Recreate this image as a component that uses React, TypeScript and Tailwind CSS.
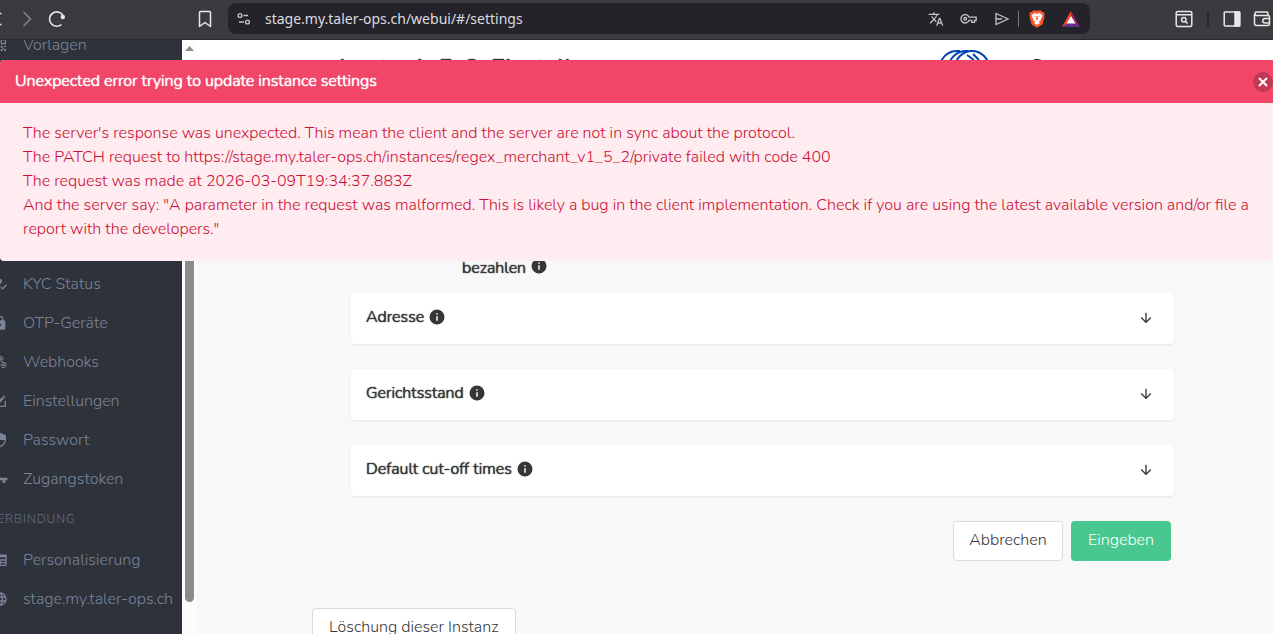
import React from 'react';

const Icon: React.FC<{ d: string; className?: string }> = ({ d, className = 'size-4' }) => (
  <svg viewBox="0 0 24 24" fill="currentColor" aria-hidden="true" className={`shrink-0 ${className}`}>
    <path d={d} />
  </svg>
);

const ICONS = {
  qrcode: 'M3 3h8v8H3zM5 5v4h4V5zM13 3h8v8h-8zM15 5v4h4V5zM3 13h8v8H3zM5 15v4h4v-4zM13 13h3v3h-3zM18 13h3v2h-3zM16 16h2v2h-2zM13 18h3v3h-3zM18 18h3v3h-3z',
  accountCheck: 'M21.1,12.5L22.5,13.91L15.97,20.5L12.5,17L13.9,15.59L15.97,17.67L21.1,12.5M10,17L13,20H3V18C3,15.79 6.58,14 11,14L12.89,14.11L10,17M11,4A4,4 0 0,1 15,8A4,4 0 0,1 11,12A4,4 0 0,1 7,8A4,4 0 0,1 11,4Z',
  lock: 'M12,17A2,2 0 0,0 14,15C14,13.89 13.1,13 12,13A2,2 0 0,0 10,15A2,2 0 0,0 12,17M18,8A2,2 0 0,1 20,10V20A2,2 0 0,1 18,22H6A2,2 0 0,1 4,20V10C4,8.89 4.9,8 6,8H7V6A5,5 0 0,1 12,1A5,5 0 0,1 17,6V8H18M12,3A3,3 0 0,0 9,6V8H15V6A3,3 0 0,0 12,3Z',
  webhook: 'M10.46,19C9,21.07 6.15,21.59 4.09,20.15C2.04,18.71 1.56,15.84 3,13.75C3.87,12.5 5.21,11.83 6.58,11.77L6.63,13.2C5.72,13.27 4.84,13.74 4.27,14.56C3.27,16 3.58,17.94 4.95,18.91C6.33,19.87 8.26,19.5 9.26,18.07C9.57,17.62 9.75,17.13 9.82,16.63V15.62L15.4,15.58L15.47,15.47C16,14.55 17.15,14.23 18.05,14.75C18.95,15.27 19.26,16.43 18.73,17.35C18.2,18.26 17.04,18.58 16.14,18.06C15.73,17.83 15.44,17.46 15.31,17.04L11.24,17.06C11.13,17.73 10.87,18.38 10.46,19M17.74,11.86C20.27,12.17 22.07,14.44 21.76,16.93C21.45,19.43 19.15,21.2 16.62,20.89C15.13,20.71 13.9,19.86 13.19,18.68L14.43,17.96C14.92,18.73 15.75,19.28 16.75,19.41C18.5,19.62 20.05,18.43 20.26,16.76C20.47,15.09 19.23,13.56 17.5,13.35C16.96,13.29 16.44,13.36 15.97,13.53L15.12,13.97L12.54,9.2H12.32C11.26,9.16 10.41,8.29 10.44,7.25C10.47,6.21 11.4,5.4 12.45,5.44C13.5,5.5 14.33,6.35 14.3,7.39C14.28,7.83 14.11,8.23 13.84,8.54L15.74,12.05C16.36,11.85 17.04,11.78 17.74,11.86M8.25,9.14C7.25,6.79 8.31,4.1 10.62,3.12C12.94,2.14 15.62,3.25 16.62,5.6C17.21,6.97 17.09,8.47 16.42,9.67L15.18,8.95C15.6,8.14 15.67,7.15 15.27,6.22C14.59,4.62 12.78,3.85 11.23,4.5C9.67,5.16 8.97,7 9.65,8.6C9.93,9.26 10.4,9.77 10.97,10.11L11.36,10.32L8.29,15.31C8.32,15.36 8.36,15.42 8.39,15.5C8.88,16.41 8.54,17.56 7.62,18.05C6.71,18.54 5.56,18.18 5.06,17.24C4.57,16.31 4.91,15.16 5.83,14.67C6.22,14.46 6.65,14.41 7.06,14.5L9.37,10.73C8.9,10.3 8.5,9.76 8.25,9.14Z',
  edit: 'M5,3C3.89,3 3,3.89 3,5V19A2,2 0 0,0 5,21H19A2,2 0 0,0 21,19V12H19V19H5V5H12V3H5M17.78,4C17.61,4 17.43,4.07 17.3,4.2L16.08,5.41L18.58,7.91L19.8,6.7C20.06,6.44 20.06,6 19.8,5.75L18.25,4.2C18.12,4.07 17.95,4 17.78,4M15.37,6.12L8,13.5V16H10.5L17.87,8.62L15.37,6.12Z',
  security: 'M12,12H19C18.47,16.11 15.72,19.78 12,20.92V12H5V6.3L12,3.19M12,1L3,5V11C3,16.55 6.84,21.73 12,23C17.16,21.73 21,16.55 21,11V5L12,1Z',
  key: 'M7 14C5.9 14 5 13.1 5 12S5.9 10 7 10 9 10.9 9 12 8.1 14 7 14M12.6 10C11.8 7.7 9.6 6 7 6C3.7 6 1 8.7 1 12S3.7 18 7 18C9.6 18 11.8 16.3 12.6 14H16V18H20V14H23V10H12.6Z',
  newspaper: 'M20,11H4V8H20M20,15H13V13H20M20,19H13V17H20M11,19H4V13H11M20.33,4.67L18.67,3L17,4.67L15.33,3L13.67,4.67L12,3L10.33,4.67L8.67,3L7,4.67L5.33,3L3.67,4.67L2,3V19A2,2 0 0,0 4,21H20A2,2 0 0,0 22,19V3L20.33,4.67Z',
  web: 'M16.36,14C16.44,13.34 16.5,12.68 16.5,12C16.5,11.32 16.44,10.66 16.36,10H19.74C19.9,10.64 20,11.31 20,12C20,12.69 19.9,13.36 19.74,14M14.59,19.56C15.19,18.45 15.65,17.25 15.97,16H18.92C17.96,17.65 16.43,18.93 14.59,19.56M14.34,14H9.66C9.56,13.34 9.5,12.68 9.5,12C9.5,11.32 9.56,10.65 9.66,10H14.34C14.43,10.65 14.5,11.32 14.5,12C14.5,12.68 14.43,13.34 14.34,14M12,19.96C11.17,18.76 10.5,17.43 10.09,16H13.91C13.5,17.43 12.83,18.76 12,19.96M8,8H5.08C6.03,6.34 7.57,5.06 9.4,4.44C8.8,5.55 8.35,6.75 8,8M5.08,16H8C8.35,17.25 8.8,18.45 9.4,19.56C7.57,18.93 6.03,17.65 5.08,16M4.26,14C4.1,13.36 4,12.69 4,12C4,11.31 4.1,10.64 4.26,10H7.64C7.56,10.66 7.5,11.32 7.5,12C7.5,12.68 7.56,13.34 7.64,14M12,4.03C12.83,5.23 13.5,6.57 13.91,8H10.09C10.5,6.57 11.17,5.23 12,4.03M18.92,8H15.97C15.65,6.75 15.19,5.55 14.59,4.44C16.43,5.07 17.96,6.34 18.92,8M12,2C6.47,2 2,6.5 2,12A10,10 0 0,0 12,22A10,10 0 0,0 22,12A10,10 0 0,0 12,2Z',
  information: 'M13,9H11V7H13M13,17H11V11H13M12,2A10,10 0 0,0 2,12A10,10 0 0,0 12,22A10,10 0 0,0 22,12A10,10 0 0,0 12,2Z',
  arrowDown: 'M11,4H13V16L18.5,10.5L19.92,11.92L12,19.84L4.08,11.92L5.5,10.5L11,16V4Z',
};

const instanceItems = [
  { label: 'KYC Status', icon: ICONS.accountCheck },
  { label: 'OTP-Geräte', icon: ICONS.lock },
  { label: 'Webhooks', icon: ICONS.webhook },
  { label: 'Einstellungen', icon: ICONS.edit },
  { label: 'Passwort', icon: ICONS.security },
  { label: 'Zugangstoken', icon: ICONS.key },
];

const connectionItems = [
  { label: 'Personalisierung', icon: ICONS.newspaper },
  { label: 'stage.my.taler-ops.ch', icon: ICONS.web },
];

const sections = ['Adresse', 'Gerichtsstand', 'Default cut-off times'];

const HeavyText: React.FC<{ children: React.ReactNode }> = ({ children }) => (
  <span className="[text-shadow:0_0_1px_currentColor,0_0_1px_currentColor]">{children}</span>
);

const MenuItem: React.FC<{ label: string; icon: string }> = ({ label, icon }) => (
  <li>
    <a href="#/settings" className="flex h-[39px] items-center gap-[15px] whitespace-nowrap">
      <Icon d={icon} />
      {label}
    </a>
  </li>
);

const BrowserBar = () => (
  <header className="flex h-10 shrink-0 items-center border-b border-[#2a292e] bg-[#3b3a3f] pb-0.5 text-[#e8e8ea]">
    <button aria-label="Back" className="w-4 shrink-0">
      <svg viewBox="0 0 16 18" className="h-[18px] w-4" fill="none" stroke="currentColor" strokeWidth="1.5">
        <path d="M1.500 3.500H-2v11h3.500" />
      </svg>
    </button>
    <button aria-label="Forward" className="ml-1 text-[#87868b]">
      <svg viewBox="0 0 16 18" className="h-[18px] w-4" fill="none" stroke="currentColor" strokeWidth="1.5">
        <path d="M3.500 2l7 7-7 7" />
      </svg>
    </button>
    <button aria-label="Reload" className="ml-3">
      <svg viewBox="0 0 18 18" className="size-[18px]" fill="none" stroke="currentColor" strokeWidth="1.6">
        <path d="M13.500 14.500A7.200 7.200 0 1 1 14.800 5.200" />
        <circle cx="14.800" cy="7" r="2.200" fill="currentColor" stroke="none" />
      </svg>
    </button>
    <button aria-label="Bookmark" className="ml-[131px]">
      <svg viewBox="0 0 16 18" className="h-[18px] w-4" fill="none" stroke="currentColor" strokeWidth="1.5" strokeLinejoin="round">
        <path d="M3.500 1.500h9a1 1 0 0 1 1 1v14L8 12.500l-5.500 4v-14a1 1 0 0 1 1-1z" />
      </svg>
    </button>
    <div className="ml-[15px] flex h-[31px] min-w-0 max-w-[862px] flex-1 items-center rounded-lg bg-[#242329] pl-2 pr-[10px] text-[#c3c2c7]">
      <svg viewBox="0 0 16 16" className="size-4 shrink-0" fill="none" stroke="currentColor" strokeWidth="1.4">
        <circle cx="4" cy="4.500" r="1.9" />
        <path d="M7.500 4.500H12M3 11h5" />
        <circle cx="11.500" cy="11" r="1.9" />
      </svg>
      <input
        aria-label="Address"
        defaultValue="stage.my.taler-ops.ch/webui/#/settings"
        className="ml-[13px] min-w-0 flex-1 bg-transparent font-['Noto_Sans',sans-serif] text-[14px] font-normal text-[#dcdbe0] outline-none"
      />
      <div className="flex shrink-0 items-center">
        <svg viewBox="0 0 24 24" className="size-4" fill="currentColor">
          <path d="M12.870 15.070l-2.540-2.510.03-.03A17.500 17.500 0 0 0 14.070 6H17V4h-7V2H8v2H1v2h11.170A15.600 15.600 0 0 1 9 11.350 15.600 15.600 0 0 1 6.690 8h-2a17.600 17.600 0 0 0 2.980 4.560l-5.090 5.020L4 19l5-5 3.110 3.110.76-2.040zM18.500 10h-2L12 22h2l1.120-3h4.750L21 22h2l-4.500-12zm-2.620 7l1.620-4.330L19.120 17h-3.240z" />
        </svg>
        <svg viewBox="0 0 18 16" className="ml-4 h-4 w-[18px]" fill="none" stroke="currentColor" strokeWidth="1.3">
          <path d="M9 6.200h7.200v3.200h-1.600v2h-2.800v-2H9a4.200 4.200 0 1 1 0-3.200z" />
          <circle cx="5.200" cy="7.800" r="1.300" />
        </svg>
        <svg viewBox="0 0 16 16" className="ml-4 size-4" fill="none" stroke="currentColor" strokeWidth="1.3">
          <path d="M2 2.500L14 8 2 13.500zM2 8h6" />
        </svg>
        <span className="ml-2 h-4 w-px bg-[#77767b]" />
        <svg viewBox="0 0 16 18" className="ml-[10px] h-[18px] w-4">
          <path d="M4.200.5h7.600l1.600 1.600 1.500-.1.8 2.500-.6 1.500.3 1.300-2 7.200L8 17.700l-5.400-3.200-2-7.200.3-1.300L.3 4.500 1.100 2l1.500.1z" fill="#fb542b" />
          <path d="M5 3l3 .7L11 3l2.600 2.700-1.900 3.200.2 1.300-2.300 1.600L11 13l-3 2-3-2 1.400-1.200-2.300-1.600.2-1.300-1.900-3.200z" fill="#fff" />
          <path d="M4.500 6.200l2.300.5v.9zM11.500 6.200l-2.300.5v.9zM7.500 6h1l.4 3.500L8 10.500l-.9-1z" fill="#fb542b" />
        </svg>
        <svg viewBox="0 0 18 16" className="ml-[17px] h-4 w-[18px]">
          <path d="M9 0L0 16l9-5z" fill="#ff4724" />
          <path d="M9 0l9 16-9-5z" fill="#9e1f63" />
          <path d="M0 16h18l-9-6z" fill="#662d91" />
          <path d="M9 5l4.500 7.500h-9z" fill="#fff" />
        </svg>
      </div>
    </div>
    <div className="ml-auto flex shrink-0 items-center pr-[2px]">
      <button aria-label="Search tabs">
        <svg viewBox="0 0 18 18" className="size-[18px]" fill="none" stroke="currentColor" strokeWidth="1.5">
          <rect x="1.200" y="1.500" width="15.600" height="15" rx="1.500" />
          <path d="M1.200 4.800h15.600M10.500 11.500l2 2" />
          <circle cx="8.800" cy="9.800" r="2.200" />
        </svg>
      </button>
      <span className="ml-3.5 h-4 w-0.5 bg-[#2a292e]" />
      <button aria-label="Sidebar" className="ml-3.5">
        <svg viewBox="0 0 18 18" className="size-[18px]" fill="none" stroke="currentColor" strokeWidth="1.500">
          <rect x="1.200" y="2" width="15.600" height="14" rx="1" />
          <path d="M12 2h4.500v14H12z" fill="currentColor" />
        </svg>
      </button>
      <button aria-label="Wallet" className="ml-3">
        <svg viewBox="0 0 18 18" className="size-[18px]" fill="none" stroke="currentColor" strokeWidth="1.500">
          <path d="M15 5.500V3.500a1.500 1.500 0 0 0-1.500-1.500H3a2 2 0 0 0 0 3.500h12a1.500 1.500 0 0 1 1.500 1.500v7a1.500 1.500 0 0 1-1.500 1.500H3.500a2 2 0 0 1-2-2V4" />
          <path d="M17 8.500h-5a2 2 0 0 0 0 4.500h5" />
        </svg>
      </button>
    </div>
  </header>
);

const Sidebar = () => (
  <aside className="w-[182px] shrink-0 overflow-hidden bg-[#2e323a] text-[#7b8499]">
    <ul className="-ml-2 -mt-[15px]">
      <MenuItem label="Vorlagen" icon={ICONS.qrcode} />
    </ul>
    <ul className="-ml-2 mt-[200px]">
      {instanceItems.map((item) => (
        <MenuItem key={item.label} {...item} />
      ))}
    </ul>
    <p className="-ml-3 mt-[9px] text-[12px] leading-6 tracking-[1px] text-[#687085]">VERBINDUNG</p>
    <ul className="-ml-2 mt-[9px]">
      {connectionItems.map((item) => (
        <MenuItem key={item.label} {...item} />
      ))}
    </ul>
  </aside>
);

const ErrorNotification = () => (
  <article role="alert" className="absolute inset-x-0 top-5 overflow-hidden rounded-l bg-[#feecf0] text-[#cc0f35]">
    <div className="flex h-[43px] items-center justify-between bg-[#f14668] pl-[15px] text-white">
      <p className="pb-px">
        <HeavyText>Unexpected error trying to update instance settings</HeavyText>
      </p>
      <button aria-label="Close" className="flex size-5 items-center justify-center rounded-full bg-[#c13853]">
        <svg viewBox="0 0 10 10" className="size-[10px]" stroke="currentColor" strokeWidth="2">
          <path d="M1 1l8 8M9 1L1 9" />
        </svg>
      </button>
    </div>
    <div className="pb-5 pl-[23px] pr-1 pt-[18px] leading-6">
      <p>The server's response was unexpected. This mean the client and the server are not in sync about the protocol.</p>
      <p>The PATCH request to https://stage.my.taler-ops.ch/instances/regex_merchant_v1_5_2/private failed with code 400</p>
      <p>The request was made at 2026-03-09T19:34:37.883Z</p>
      <p>
        And the server say: "A parameter in the request was malformed. This is likely a bug in the client implementation.
        Check if you are using the latest available version and/or file a report with the developers."
      </p>
    </div>
  </article>
);

const App: React.FC = () => {
  return (
    <div className="flex h-screen flex-col overflow-hidden font-['Nunito','Lato',sans-serif] text-[16px] font-[330] text-[#363636]">
      <BrowserBar />
      <div className="relative flex min-h-0 flex-1">
        <Sidebar />
        <div className="flex w-[15px] shrink-0 flex-col items-center bg-[#fcfcfc]">
          <svg viewBox="0 0 9 5" className="mt-1.5 h-[5px] w-[9px]" fill="#8b8b8b">
            <path d="M0 5L4.500 0 9 5z" />
          </svg>
          <div className="mt-5 h-[531px] w-[9px] rounded-b-full bg-[#8b8b8b]" />
        </div>
        <main className="min-w-0 flex-1 overflow-hidden bg-[#f8f8f8]">
          <div className="flex h-14 items-start justify-between bg-white pl-4 pr-[220px] pt-2">
            <h1 className="mt-1 whitespace-nowrap text-[24px] font-medium leading-8">
              <HeavyText>regex_merchant_v1_5_2: Einstellungen</HeavyText>
            </h1>
            <svg viewBox="0 0 114 46" className="mt-0.5 h-[46px] w-[114px]" fill="none" stroke="#0042b3" strokeWidth="2">
              <path d="M18 36a17 17 0 0 1 0-35h3M27 36a17 17 0 0 1 0-35h2" />
              <circle cx="33" cy="18" r="17" />
              <path d="M28 5l7 5M34 4l6 6" />
              <circle cx="98" cy="19" r="9" stroke="#000" />
            </svg>
          </div>
          <form className="pl-[154px] pr-[99px] pt-[160px]" onSubmit={(e) => e.preventDefault()}>
            <div className="flex h-6 items-center gap-1 pl-[111px]">
              <HeavyText>bezahlen</HeavyText>
              <Icon d={ICONS.information} className="mb-1 size-[18px]" />
            </div>
            <div className="mt-[13px] flex flex-col gap-[25px]">
              {sections.map((title) => (
                <section key={title} className="rounded bg-white shadow-[0_1px_2px_rgba(10,10,10,0.08)]">
                  <button type="button" className="flex h-[51px] w-full items-center justify-between pb-px pl-[15px] pr-5">
                    <span className="mb-0.5 flex items-center gap-1">
                      <HeavyText>{title}</HeavyText>
                      <Icon d={ICONS.information} className="mb-px size-[18px]" />
                    </span>
                    <Icon d={ICONS.arrowDown} />
                  </button>
                </section>
              ))}
            </div>
            <div className="mt-[25px] flex justify-end gap-2 pr-[3px]">
              <button type="button" className="h-10 w-[110px] rounded border border-[#dbdbdb] bg-white pb-0.5">
                Abbrechen
              </button>
              <button type="submit" className="h-10 w-[100px] rounded bg-[#48c78e] pb-0.5 text-white">
                Eingeben
              </button>
            </div>
          </form>
          <div className="mt-[47px] pl-[115px]">
            <button className="h-10 rounded border border-[#dbdbdb] bg-white px-4 pb-0.5">Löschung dieser Instanz</button>
          </div>
        </main>
        <ErrorNotification />
      </div>
    </div>
  );
};

export default App;
